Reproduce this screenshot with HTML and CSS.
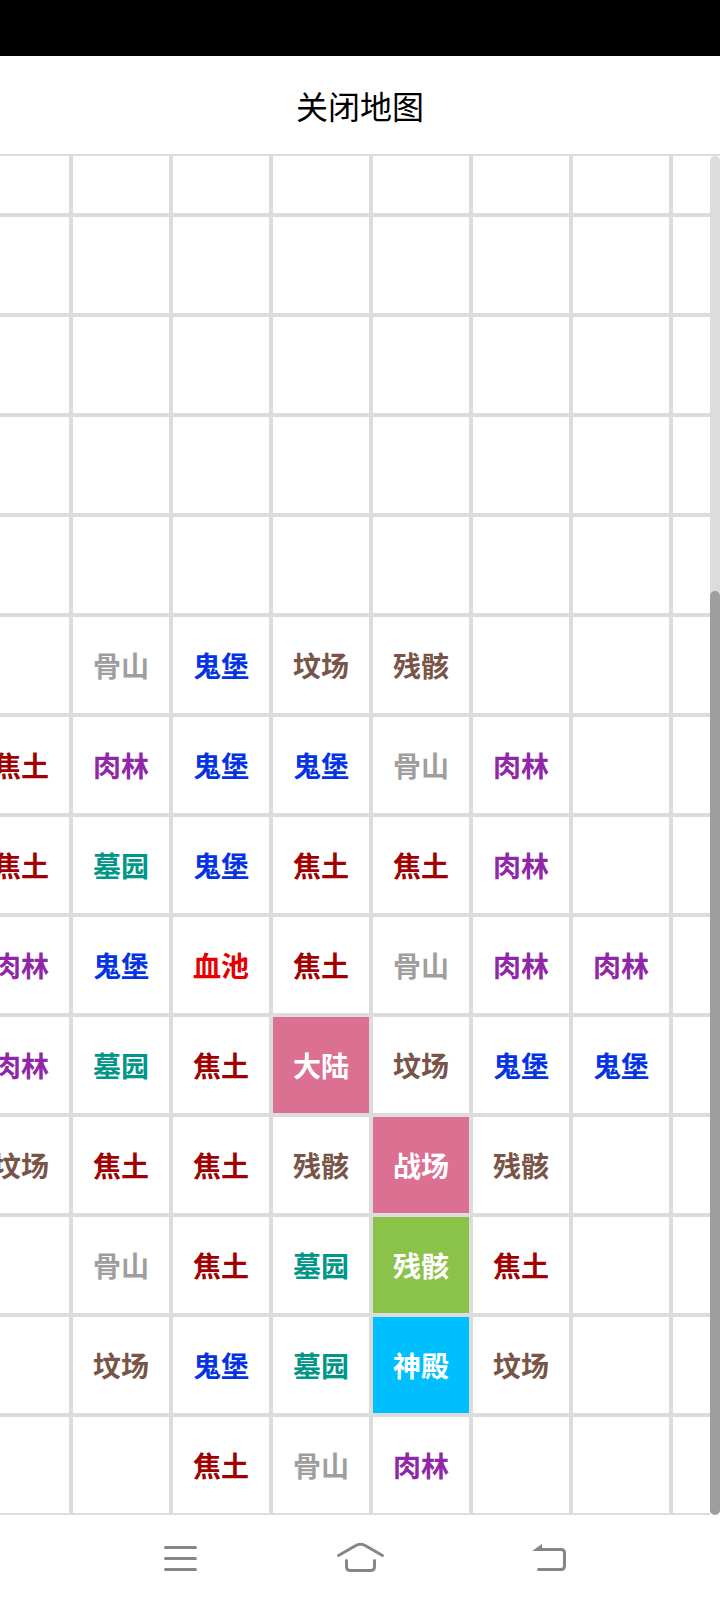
FILE: index.html
```html
<!DOCTYPE html>
<html lang="zh-CN">
<head>
    <meta charset="utf-8" />
    <title>地图</title>
    <meta name="viewport" content="width=device-width, initial-scale=1.0" />
    <link rel="stylesheet" href="styles.css">
</head>

<body>
<div class="status"></div>
<button type="button" class="close">关闭地图</button>

<main class="map">
    <div class="view">
        <table class="grid">
            <tr><td></td><td></td><td></td><td></td><td></td><td></td><td></td><td></td></tr>
            <tr><td></td><td></td><td></td><td></td><td></td><td></td><td></td><td></td></tr>
            <tr><td></td><td></td><td></td><td></td><td></td><td></td><td></td><td></td></tr>
            <tr><td></td><td></td><td></td><td></td><td></td><td></td><td></td><td></td></tr>
            <tr><td></td><td></td><td></td><td></td><td></td><td></td><td></td><td></td></tr>
            <tr>
                <td></td>
                <td class="bone">骨山</td>
                <td class="fort">鬼堡</td>
                <td class="grave">坟场</td>
                <td class="grave">残骸</td>
                <td></td>
                <td></td>
                <td></td>
            </tr>
            <tr>
                <td class="scorch">焦土</td>
                <td class="flesh">肉林</td>
                <td class="fort">鬼堡</td>
                <td class="fort">鬼堡</td>
                <td class="bone">骨山</td>
                <td class="flesh">肉林</td>
                <td></td>
                <td></td>
            </tr>
            <tr>
                <td class="scorch">焦土</td>
                <td class="tomb">墓园</td>
                <td class="fort">鬼堡</td>
                <td class="scorch">焦土</td>
                <td class="scorch">焦土</td>
                <td class="flesh">肉林</td>
                <td></td>
                <td></td>
            </tr>
            <tr>
                <td class="flesh">肉林</td>
                <td class="fort">鬼堡</td>
                <td class="blood">血池</td>
                <td class="scorch">焦土</td>
                <td class="bone">骨山</td>
                <td class="flesh">肉林</td>
                <td class="flesh">肉林</td>
                <td></td>
            </tr>
            <tr>
                <td class="flesh">肉林</td>
                <td class="tomb">墓园</td>
                <td class="scorch">焦土</td>
                <td class="gate">大陆</td>
                <td class="grave">坟场</td>
                <td class="fort">鬼堡</td>
                <td class="fort">鬼堡</td>
                <td></td>
            </tr>
            <tr>
                <td class="grave">坟场</td>
                <td class="scorch">焦土</td>
                <td class="scorch">焦土</td>
                <td class="grave">残骸</td>
                <td class="gate">战场</td>
                <td class="grave">残骸</td>
                <td></td>
                <td></td>
            </tr>
            <tr>
                <td></td>
                <td class="bone">骨山</td>
                <td class="scorch">焦土</td>
                <td class="tomb">墓园</td>
                <td class="here">残骸</td>
                <td class="scorch">焦土</td>
                <td></td>
                <td></td>
            </tr>
            <tr>
                <td></td>
                <td class="grave">坟场</td>
                <td class="fort">鬼堡</td>
                <td class="tomb">墓园</td>
                <td class="temple">神殿</td>
                <td class="grave">坟场</td>
                <td></td>
                <td></td>
            </tr>
            <tr>
                <td></td>
                <td></td>
                <td class="scorch">焦土</td>
                <td class="bone">骨山</td>
                <td class="flesh">肉林</td>
                <td></td>
                <td></td>
                <td></td>
            </tr>
        </table>
    </div>
    <div class="track"><div class="thumb"></div></div>
</main>

<nav class="keys">
    <button type="button" aria-label="菜单">
        <svg width="64" height="45" viewBox="0 0 64 45">
            <path d="M17.5 12.5H47.5M17.5 23.5H47.5M17.5 34.5H47.5" />
        </svg>
    </button>
    <button type="button" aria-label="主页">
        <svg width="64" height="45" viewBox="0 0 64 45">
            <path d="M10.5 20.5L27 11Q32.5 7.5 38 11L54.5 20.5" />
            <path d="M18.5 25.5V31.5Q18.5 35.5 22.5 35.5H42.5Q46.5 35.5 46.5 31.5V25.5" />
        </svg>
    </button>
    <button type="button" aria-label="返回">
        <svg width="64" height="45" viewBox="0 0 64 45">
            <path d="M31 14.5H53Q56.5 14.5 56.5 18V31Q56.5 34.5 53 34.5H30.5" />
            <path class="tip" d="M24 16L34 9V16Z" />
        </svg>
    </button>
</nav>
</body>
</html>
```

FILE: styles.css
```css
body {
    display: flex;
    flex-direction: column;
    height: 100vh;
    margin: 0;
    background: #fff;
    font-family: "Noto Sans CJK SC", sans-serif;
    color: #000;
}
button {
    padding: 0;
    border: 0;
    background: none;
    font: inherit;
    color: inherit;
}
.status {
    flex: none;
    height: 56px;
    background: #000;
}
.close {
    flex: none;
    height: 100px;
    border-bottom: 2px solid #dcdcdc;
    font-size: 32px;
}

/* map, scrolled down to the last row */
.map {
    flex: 1;
    display: flex;
    min-height: 0;
}
.view {
    flex: 1;
    display: flex;
    align-items: flex-end;
    min-width: 0;
    overflow: hidden;
}
.grid {
    flex: none;
    table-layout: fixed;
    width: 800px;
    margin-left: -29px;
    border-spacing: 0;
}
td {
    box-sizing: border-box;
    height: 100px;
    padding: 0;
    border: 2px solid #dcdcdc;
    font-size: 28px;
    font-weight: bold;
    line-height: 40px;
    text-align: center;
}
.bone { color: #9e9e9e; }
.fort { color: #0433e6; }
.grave { color: #795548; }
.scorch { color: #a00000; }
.flesh { color: #9027a8; }
.tomb { color: #009688; }
.blood { color: #e60000; }
.gate, .here, .temple { color: #fff; }
.gate { background: #db7093; }
.here { background: #8bc34a; }
.temple { background: #00bfff; }

.track {
    display: flex;
    flex-direction: column;
    justify-content: flex-end;
    width: 10px;
    border-radius: 5px;
    background: #dcdcdc;
}
.thumb {
    height: 68%;
    border-radius: 5px;
    background: #9e9e9e;
}

.keys {
    flex: none;
    display: grid;
    grid-template-columns: repeat(3, 1fr);
    height: 85px;
    padding: 0 12.5%;
}
.keys button {
    display: flex;
    align-items: center;
    justify-content: center;
}
.keys path {
    fill: none;
    stroke: #868686;
    stroke-width: 3;
    stroke-linecap: round;
}
.keys .tip {
    fill: #868686;
    stroke: none;
}
```
